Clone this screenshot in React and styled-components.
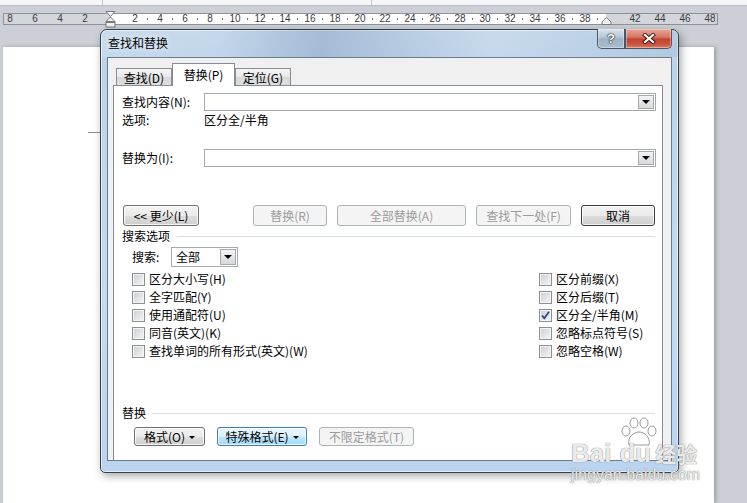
import React from 'react';
import styled, { createGlobalStyle } from 'styled-components';

const GlobalStyle = createGlobalStyle`
  html, body { margin: 0; padding: 0; }
  body {
    font-family: "Noto Sans CJK SC", "Liberation Sans", sans-serif;
    font-size: 12px;
    color: #000;
  }
`;

const Screen = styled.div`
  position: relative;
  width: 747px;
  height: 503px;
  overflow: hidden;
  background: #ccd0d6;
  display: flex;
  flex-direction: column;
`;

const TopStrip = styled.div`
  display: flex;
  height: 5px;
  background: #f5f6f8;
  border-bottom: 1px solid #b7bcc3;
`;

const StripCell = styled.div`
  width: ${p => p.$w}px;
  border-right: 1px solid #c3c8ce;
`;

const Ruler = styled.div`
  position: relative;
  margin: 7px 0 0 3px;
  width: 713px;
  height: 10px;
  border: 1px solid #8b929a;
  display: flex;
  font-family: "Liberation Sans", sans-serif;
  font-size: 10px;
  color: #3a3a3a;
`;

const RulerPart = styled.div`
  width: ${p => p.$w}px;
  flex-shrink: 0;
  overflow: hidden;
  display: flex;
  justify-content: ${p => (p.$end ? 'flex-end' : 'flex-start')};
  padding-left: ${p => p.$pl || 0}px;
  padding-right: ${p => p.$pr || 0}px;
  box-sizing: border-box;
  background: ${p => (p.$margin ? '#d3d7dc' : '#fff')};
`;

const RulerNum = styled.div`
  position: relative;
  flex-shrink: 0;
  width: 25px;
  height: 10px;
  line-height: 10px;
  text-align: center;
  &::after {
    content: '';
    position: absolute;
    right: 0;
    top: 4px;
    width: 1px;
    height: 2px;
    background: ${p => (p.$ticks ? '#6b6b6b' : 'transparent')};
  }
`;

const Marker = styled.svg`
  position: absolute;
  top: ${p => p.$top}px;
  left: ${p => p.$left}px;
`;

const DocArea = styled.div`
  margin: 22px 0 0 3px;
  width: 711px;
  flex: 1;
  background: #fff;
  box-shadow: 2px 0 4px rgba(0, 0, 0, 0.25);
`;

const CornerMark = styled.div`
  margin: 85px 0 0 85px;
  width: 15px;
  height: 1px;
  background: #8d8d8d;
`;

const Dialog = styled.div`
  position: absolute;
  left: 100px;
  top: 29px;
  width: 579px;
  height: 444px;
  box-sizing: border-box;
  border: 1px solid #34404d;
  border-radius: 7px 7px 5px 5px;
  background: linear-gradient(to bottom, #c3d6ea 0, #bcd3eb 40px, #c3daf2 60%, #bad4f0 100%);
  box-shadow: inset 0 0 0 1px rgba(255, 255, 255, 0.55), 2px 3px 8px rgba(0, 0, 0, 0.35);
  display: flex;
  flex-direction: column;
  padding: 0 6px 11px 6px;
`;

const TitleBar = styled.div`
  height: 27px;
  margin: 0 -6px;
  padding: 0 6px;
  display: flex;
  align-items: flex-start;
  border-radius: 6px 6px 0 0;
  background: linear-gradient(90deg,
    rgba(255, 255, 255, 0.12) 0,
    rgba(255, 255, 255, 0.05) 20%,
    rgba(110, 140, 172, 0.35) 38%,
    rgba(140, 165, 192, 0.25) 50%,
    rgba(255, 255, 255, 0.1) 68%,
    rgba(150, 175, 200, 0.3) 100%);
`;

const Title = styled.div`
  flex: 1;
  margin-left: 1px;
  height: 26px;
  line-height: 26px;
  font-size: 12px;
  color: #000;
  text-shadow: 0 0 6px rgba(255, 255, 255, 0.9);
`;

const CaptionButton = styled.div`
  box-sizing: border-box;
  margin-top: -1px;
  width: ${p => p.$w}px;
  height: 20px;
  display: flex;
  align-items: center;
  justify-content: center;
  border: 1px solid #4a5664;
  border-top: none;
  border-radius: ${p => (p.$close ? '0 0 5px 0' : '0 0 0 5px')};
  background: ${p =>
    p.$close
      ? 'linear-gradient(#e7a79a 0, #d77a67 40%, #c14431 55%, #cc5a43 85%, #d88570 100%)'
      : 'linear-gradient(#dbe4ee 0, #b9c8d8 40%, #9fb2c6 55%, #aabed2 100%)'};
  box-shadow: inset 0 0 0 1px rgba(255, 255, 255, 0.35);
  color: #fff;
  font-family: "Liberation Sans", sans-serif;
  font-weight: bold;
  font-size: 13px;
  text-shadow: 0 0 1px #222, 0 0 1px #222, 0 0 2px #333;
`;

const Client = styled.div`
  flex: 1;
  border: 1px solid #6c7a8a;
  background: #f0f0f0;
  padding: 5px 8px 0 5px;
  display: flex;
  flex-direction: column;
`;

const TabBar = styled.div`
  display: flex;
  align-items: flex-end;
  height: 22px;
  margin-left: 3px;
`;

const Tab = styled.div`
  box-sizing: border-box;
  position: relative;
  z-index: ${p => (p.$active ? 1 : 0)};
  width: ${p => p.$w}px;
  height: ${p => (p.$active ? 23 : 17)}px;
  margin-bottom: ${p => (p.$active ? -1 : 0)}px;
  border: 1px solid #898c95;
  border-bottom: none;
  background: ${p => (p.$active ? '#fff' : 'linear-gradient(#f4f4f4, #e9e9e9 50%, #dadada 51%, #dedede)')};
  display: flex;
  align-items: center;
  justify-content: center;
  line-height: 15px;
  padding-bottom: ${p => (p.$active ? 2 : 0)}px;
`;

const Panel = styled.div`
  flex: 1;
  background: #fff;
  border: 1px solid #898c95;
  border-bottom: none;
  padding: 0 6px 0 8px;
  display: flex;
  flex-direction: column;
`;

const FieldRow = styled.div`
  display: flex;
  align-items: center;
  height: ${p => p.$h || 18}px;
  margin-top: ${p => p.$mt || 0}px;
  line-height: 16px;
`;

const FieldLabel = styled.div`
  width: ${p => p.$w || 82}px;
  padding-left: ${p => p.$pl || 0}px;
  box-sizing: border-box;
  flex-shrink: 0;
`;

const Combo = styled.div`
  box-sizing: border-box;
  flex: ${p => (p.$w ? 'none' : 1)};
  width: ${p => (p.$w ? `${p.$w}px` : 'auto')};
  height: ${p => p.$h || 18}px;
  border: 1px solid #a3a9b1;
  background: #fff;
  display: flex;
  align-items: center;
  justify-content: space-between;
  padding: 1px;
`;

const ComboText = styled.div`
  padding-left: 3px;
`;

const ArrowBox = styled.div`
  box-sizing: border-box;
  width: 16px;
  height: 100%;
  border: 1px solid #a8a8a8;
  background: linear-gradient(#f5f5f5, #e6e6e6 50%, #d8d8d8);
  display: flex;
  align-items: center;
  justify-content: center;
  &::before {
    content: '';
    border-left: 4px solid transparent;
    border-right: 4px solid transparent;
    border-top: 4px solid #000;
  }
`;

const ButtonRow = styled.div`
  display: flex;
  align-items: center;
  margin-top: ${p => p.$mt || 0}px;
  padding-left: ${p => p.$pl || 0}px;
  padding-right: ${p => p.$pr || 0}px;
  gap: ${p => p.$gap || 10}px;
`;

const Button = styled.div`
  box-sizing: border-box;
  width: ${p => p.$w}px;
  height: ${p => p.$h || 21}px;
  margin-left: ${p => p.$ml || 0}px;
  display: flex;
  align-items: center;
  justify-content: center;
  gap: 4px;
  border: 1px solid ${p => (p.$disabled ? '#adb2b5' : p.$focus ? '#3c7fb1' : p.$default ? '#3d3d3d' : '#707070')};
  border-radius: 3px;
  color: ${p => (p.$disabled ? '#9b9b9b' : '#000')};
  background: ${p =>
    p.$disabled
      ? '#f4f4f4'
      : p.$focus
      ? 'linear-gradient(#eaf6fd 0, #d9f0fc 50%, #bee6fd 51%, #a7d9f5 100%)'
      : 'linear-gradient(#f2f2f2 0, #ebebeb 50%, #dddddd 51%, #cfcfcf 100%)'};
  box-shadow: ${p => (p.$disabled ? 'none' : 'inset 0 0 0 1px rgba(255, 255, 255, 0.75)')};
  line-height: 15px;
  white-space: nowrap;
`;

const DropCaret = styled.span`
  display: inline-block;
  border-left: 3px solid transparent;
  border-right: 3px solid transparent;
  border-top: 3px solid #000;
  margin-top: 1px;
`;

const SectionRow = styled.div`
  display: flex;
  align-items: center;
  height: 16px;
  margin-top: ${p => p.$mt}px;
  line-height: 16px;
`;

const SectionLine = styled.div`
  flex: 1;
  height: 1px;
  margin: 0 1px 0 ${p => p.$gap}px;
  background: #d5dfe5;
`;

const CheckArea = styled.div`
  display: flex;
  margin-top: 3px;
  padding-left: 10px;
`;

const CheckColumn = styled.div`
  width: ${p => (p.$w ? `${p.$w}px` : 'auto')};
  display: flex;
  flex-direction: column;
`;

const CheckRow = styled.div`
  display: flex;
  align-items: center;
  gap: 4px;
  height: 18px;
  line-height: 16px;
  white-space: nowrap;
`;

const Box = styled.div`
  box-sizing: border-box;
  width: 13px;
  height: 13px;
  border: 1px solid #8e8f8f;
  background: linear-gradient(135deg, #cbced3 0%, #e3e4e6 55%, #f6f6f6 100%);
  box-shadow: inset 0 0 0 1px #f4f4f4;
  display: flex;
  align-items: center;
  justify-content: center;
`;

const Watermark = styled.div`
  position: absolute;
  left: 571px;
  top: 417px;
  display: flex;
  flex-direction: column;
  color: rgba(255, 255, 255, 0.85);
  text-shadow: 0 0 1px rgba(120, 120, 120, 0.8), 0 0 1px rgba(120, 120, 120, 0.8);
  pointer-events: none;
`;

const BrandRow = styled.div`
  display: flex;
  align-items: flex-end;
  margin-top: -7px;
  font-family: "Liberation Sans", sans-serif;
  font-weight: bold;
  font-size: 26px;
  line-height: 26px;
`;

const BrandDu = styled.span`
  margin-left: 8px;
`;

const BrandCn = styled.span`
  font-family: "Noto Sans CJK SC", sans-serif;
  font-size: 21px;
  line-height: 26px;
  margin-left: 4px;
`;

const BrandUrl = styled.div`
  font-family: "Liberation Sans", sans-serif;
  font-size: 16px;
  line-height: 17px;
  margin-top: 0;
`;

const Check = ({ checked, label }) => (
  <CheckRow>
    <Box>
      {checked && (
        <svg width="11" height="11" viewBox="0 0 11 11">
          <path d="M2 5.5 L4.3 8.3 L9 1.8" fill="none" stroke="#2b3f8c" strokeWidth="1.7" />
        </svg>
      )}
    </Box>
    <span>{label}</span>
  </CheckRow>
);

const leftNums = [8, 6, 4, 2];
const bodyNums = [2, 4, 6, 8, 10, 12, 14, 16, 18, 20, 22, 24, 26, 28, 30, 32, 34, 36, 38];
const rightNums = [42, 44, 46, 48];

const leftChecks = ['区分大小写(H)', '全字匹配(Y)', '使用通配符(U)', '同音(英文)(K)', '查找单词的所有形式(英文)(W)'];
const rightChecks = [
  { label: '区分前缀(X)' },
  { label: '区分后缀(T)' },
  { label: '区分全/半角(M)', checked: true },
  { label: '忽略标点符号(S)' },
  { label: '忽略空格(W)' },
];

const App = () => {
  return (
    <Screen>
      <GlobalStyle />
      <TopStrip>
        <StripCell $w={102} />
        <StripCell $w={268} />
      </TopStrip>

      <Ruler>
        <RulerPart $w={106} $margin $end $pr={12.5}>
          {leftNums.map(n => (
            <RulerNum key={n}>{n}</RulerNum>
          ))}
        </RulerPart>
        <RulerPart $w={496} $pl={12.5}>
          {bodyNums.map(n => (
            <RulerNum key={n} $ticks>{n}</RulerNum>
          ))}
        </RulerPart>
        <RulerPart $w={109} $margin $pl={16.5}>
          {rightNums.map(n => (
            <RulerNum key={n}>{n}</RulerNum>
          ))}
        </RulerPart>
        <Marker $left={101} $top={-3} width="11" height="17" viewBox="0 0 11 17">
          <path d="M1 0.5 H10 L5.5 5.5 Z" fill="#f2f2f2" stroke="#7a7a7a" />
          <path d="M5.5 6 L10 10.5 H1 Z" fill="#f2f2f2" stroke="#7a7a7a" />
          <rect x="1" y="11.5" width="9" height="4.5" fill="#f2f2f2" stroke="#7a7a7a" />
        </Marker>
        <Marker $left={597} $top={3} width="11" height="8" viewBox="0 0 11 8">
          <path d="M5.5 0.5 L10 5 V7.5 H1 V5 Z" fill="#f2f2f2" stroke="#7a7a7a" />
        </Marker>
      </Ruler>

      <DocArea>
        <CornerMark />
      </DocArea>

      <Dialog>
        <TitleBar>
          <Title>查找和替换</Title>
          <CaptionButton $w={28}>?</CaptionButton>
          <CaptionButton $w={47} $close>
            <svg width="14" height="11" viewBox="0 0 14 11">
              <path d="M3 2 L11 9 M11 2 L3 9" stroke="#3d1410" strokeWidth="4" strokeLinecap="square" />
              <path d="M3 2 L11 9 M11 2 L3 9" stroke="#fff" strokeWidth="2.2" strokeLinecap="square" />
            </svg>
          </CaptionButton>
        </TitleBar>

        <Client>
          <TabBar>
            <Tab $w={56}>查找(D)</Tab>
            <Tab $w={63} $active>替换(P)</Tab>
            <Tab $w={56}>定位(G)</Tab>
          </TabBar>

          <Panel>
            <FieldRow $mt={7}>
              <FieldLabel>查找内容(N):</FieldLabel>
              <Combo>
                <ComboText />
                <ArrowBox />
              </Combo>
            </FieldRow>
            <FieldRow $h={16} $mt={1}>
              <FieldLabel>选项:</FieldLabel>
              <span>区分全/半角</span>
            </FieldRow>
            <FieldRow $mt={21}>
              <FieldLabel>替换为(I):</FieldLabel>
              <Combo>
                <ComboText />
                <ArrowBox />
              </Combo>
            </FieldRow>

            <ButtonRow $mt={38} $pl={1} $pr={1}>
              <Button $w={76}>&lt;&lt; 更少(L)</Button>
              <Button $w={74} $ml={44} $disabled>替换(R)</Button>
              <Button $w={129} $disabled>全部替换(A)</Button>
              <Button $w={95} $disabled>查找下一处(F)</Button>
              <Button $w={74} $default>取消</Button>
            </ButtonRow>

            <SectionRow $mt={2}>
              <span>搜索选项</span>
              <SectionLine $gap={7} />
            </SectionRow>

            <FieldRow $h={20} $mt={3}>
              <FieldLabel $w={49} $pl={10}>搜索:</FieldLabel>
              <Combo $w={67} $h={20}>
                <ComboText>全部</ComboText>
                <ArrowBox />
              </Combo>
            </FieldRow>

            <CheckArea>
              <CheckColumn $w={407}>
                {leftChecks.map(label => (
                  <Check key={label} label={label} />
                ))}
              </CheckColumn>
              <CheckColumn>
                {rightChecks.map(c => (
                  <Check key={c.label} label={c.label} checked={c.checked} />
                ))}
              </CheckColumn>
            </CheckArea>

            <SectionRow $mt={45}>
              <span>替换</span>
              <SectionLine $gap={6} />
            </SectionRow>

            <ButtonRow $mt={6} $pl={12} $gap={12}>
              <Button $w={71} $h={19}>
                格式(O) <DropCaret />
              </Button>
              <Button $w={90} $h={19} $focus>
                特殊格式(E) <DropCaret />
              </Button>
              <Button $w={95} $h={19} $disabled>不限定格式(T)</Button>
            </ButtonRow>
          </Panel>
        </Client>
      </Dialog>

      <Watermark>
        <svg width="44" height="30" viewBox="0 0 44 30" style={{ marginLeft: 46 }}>
          <g fill="rgba(255,255,255,0.85)" stroke="#9a9a9a" strokeWidth="1">
            <ellipse cx="9" cy="14" rx="4" ry="5" />
            <ellipse cx="17" cy="6" rx="4" ry="5" />
            <ellipse cx="27" cy="6" rx="4" ry="5" />
            <ellipse cx="35" cy="14" rx="4" ry="5" />
            <path d="M12 28 C10 20 17 15 22 15 C27 15 34 20 32 28 Z" />
          </g>
        </svg>
        <BrandRow>
          <span>Bai</span>
          <BrandDu>du</BrandDu>
          <BrandCn>经验</BrandCn>
        </BrandRow>
        <BrandUrl>jingyan.baidu.com</BrandUrl>
      </Watermark>
    </Screen>
  );
};

export default App;
